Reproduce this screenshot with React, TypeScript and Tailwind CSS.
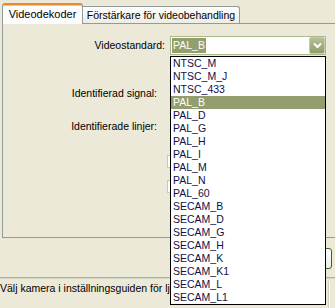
import React from "react"

const items = [
  "NTSC_M",
  "NTSC_M_J",
  "NTSC_433",
  "PAL_B",
  "PAL_D",
  "PAL_G",
  "PAL_H",
  "PAL_I",
  "PAL_M",
  "PAL_N",
  "PAL_60",
  "SECAM_B",
  "SECAM_D",
  "SECAM_G",
  "SECAM_H",
  "SECAM_K",
  "SECAM_K1",
  "SECAM_L",
  "SECAM_L1",
]

export default function App() {
  const selected = "PAL_B"

  return (
    <div className="relative w-[335px] h-[308px] overflow-hidden bg-[#ECE9D8] font-['Liberation_Sans',Arial,sans-serif] text-[10.5px] leading-none text-black whitespace-nowrap">
      {/* Tabs */}
      <div className="flex items-end pl-[2px] pt-[3px] h-[23px]">
        <div className="relative z-10 w-[81px] h-[21px] -mb-px rounded-t-[3px] border-x border-[#919B9C] border-t-2 border-t-[#E68B2C] bg-[#FCFCFE] shadow-[inset_0_1px_0_#FFC73C] flex items-center justify-center pb-[1px] text-[11px]">
          Videodekoder
        </div>
        <div className="w-[157px] h-[17px] rounded-tr-[3px] border-t border-r border-[#919B9C] bg-gradient-to-b from-[#FEFEFD] to-[#EDECE5] flex items-center justify-center text-[10.5px]">
          Förstärkare för videobehandling
        </div>
      </div>

      {/* Panel */}
      <div className="ml-[2px] w-[345px] h-[215px] border border-[#919B9C] bg-[#ECE9D8]">
        <div className="flex items-center mt-[12px] h-[19px]">
          <div className="w-[163px] text-right pr-[1px]">Videostandard:</div>
          <div className="ml-[4px] relative w-[156px] h-[19px] border border-[#A8B88A] bg-white flex items-center pl-[1px]">
            <span className="bg-[#939E6E] text-white h-[15px] px-[1px] flex items-center">PAL_B</span>
            <span className="ml-auto w-[16px] h-[17px] rounded-[2px] border border-[#C3CDAB] bg-gradient-to-b from-[#B5C194] to-[#8E9D6A] flex items-center justify-center">
              <svg width="9" height="7" viewBox="0 0 9 7">
                <path d="M1 1.5 L4.5 5 L8 1.5" stroke="#FFFFFF" strokeWidth="2" fill="none" />
              </svg>
            </span>
          </div>
        </div>

        <div className="flex items-center mt-[31px] h-[14px]">
          <div className="w-[154px] text-right">Identifierad signal:</div>
        </div>
        <div className="flex items-center mt-[19px] h-[14px]">
          <div className="w-[154px] text-right">Identifierade linjer:</div>
        </div>

        <div className="ml-[164px] mt-[22px] w-[130px] h-[13px] border border-[#C9C7BA] bg-white" />
        <div className="ml-[164px] mt-[12px] w-[130px] h-[13px] border border-[#C9C7BA] bg-white" />
      </div>

      {/* Button row */}
      <div className="flex justify-end pr-[3px] mt-[10px]">
        <div className="w-[76px] h-[21px] rounded-[3px] border border-[#37622B] bg-gradient-to-b from-[#FFFFFD] to-[#ECEBE3]" />
      </div>

      {/* Status bar */}
      <div className="mt-[8px] border-t border-[#A9B58F] shadow-[inset_0_1px_0_#D3D9C2] h-[33px] flex">
        <div className="w-[170px] pt-[5px] overflow-hidden">
          Välj kamera i inställningsguiden för ljud och video.
        </div>
        <div className="flex-1" />
        <div className="mt-[3px] w-[2px] border-l border-[#D2CFBF] bg-white mr-[5px]" />
      </div>

      {/* Open dropdown list */}
      <div className="absolute left-[170px] top-[56px] w-[156px] h-[249px] border border-black bg-white z-20">
        {items.map((item) => (
          <div
            key={item}
            className={
              item === selected
                ? "h-[13px] pl-[2px] flex items-center bg-[#939E6E] text-white"
                : "h-[13px] pl-[2px] flex items-center text-[#10104A]"
            }
          >
            {item}
          </div>
        ))}
      </div>
    </div>
  )
}
